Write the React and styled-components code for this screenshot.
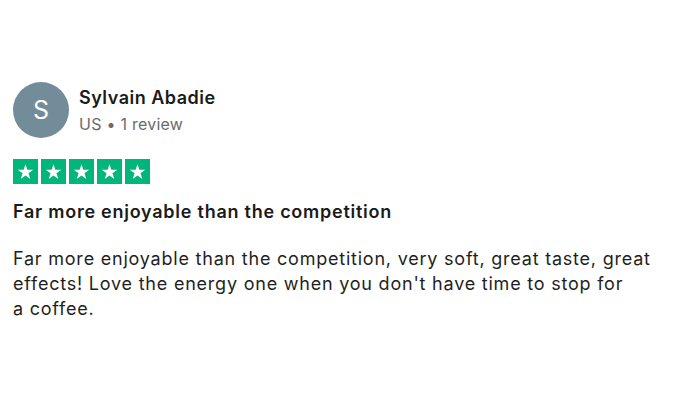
import React from "react";
import styled, { createGlobalStyle } from "styled-components";

const Global = createGlobalStyle`
  html, body { margin: 0; padding: 0; background: #ffffff; }
  body { font-family: Inter, "Noto Sans", Arial, sans-serif; -webkit-font-smoothing: antialiased; }
`;

const Card = styled.article`
  width: 700px;
  height: 400px;
  box-sizing: border-box;
  padding: 82px 13px 0 13px;
  display: flex;
  flex-direction: column;
`;

const Header = styled.header`
  display: flex;
  align-items: center;
  gap: 10px;
`;

const Avatar = styled.div`
  width: 56px;
  height: 56px;
  border-radius: 50%;
  background: #728c9a;
  color: #ffffff;
  display: flex;
  align-items: center;
  justify-content: center;
  font-size: 25px;
  font-weight: 400;
  flex-shrink: 0;
`;

const Info = styled.div`
  display: flex;
  flex-direction: column;
  gap: 4px;
`;

const Name = styled.div`
  font-size: 18px;
  line-height: 24px;
  font-weight: 600;
  letter-spacing: 0.5px;
  color: #1a1a1a;
`;

const Meta = styled.div`
  font-size: 16px;
  line-height: 20px;
  letter-spacing: 0.25px;
  color: #6b6b6b;
`;

const Stars = styled.div`
  display: flex;
  gap: 3px;
  margin-top: 21px;
`;

const StarBox = styled.span`
  width: 25px;
  height: 25px;
  background: ${p => (p.$on ? "#00b67a" : "#dcdce6")};
  display: flex;
  align-items: center;
  justify-content: center;
`;

const Title = styled.h2`
  margin: 16px 0 0 0;
  font-size: 18px;
  line-height: 24px;
  font-weight: 600;
  letter-spacing: 0.75px;
  color: #1a1a1a;
`;

const Body = styled.p`
  margin: 22px 0 0 0;
  max-width: 660px;
  font-size: 18px;
  line-height: 25px;
  letter-spacing: 0.78px;
  color: #1f1f1f;
`;

const Star = () => (
  <svg width="17" height="17" viewBox="0 0 24 24" aria-hidden="true">
    <path
      fill="#ffffff"
      d="M12 1.8l2.6 7.9h8.3l-6.7 4.9 2.6 7.9L12 17.6l-6.8 4.9 2.6-7.9-6.7-4.9h8.3z"
    />
  </svg>
);

export default function App() {
  return (
    <>
      <Global />
      <Card>
        <Header>
          <Avatar>S</Avatar>
          <Info>
            <Name>Sylvain Abadie</Name>
            <Meta>US • 1 review</Meta>
          </Info>
        </Header>
        <Stars>
          {[0, 1, 2, 3, 4].map(i => (
            <StarBox key={i} $on>
              <Star />
            </StarBox>
          ))}
        </Stars>
        <Title>Far more enjoyable than the competition</Title>
        <Body>
          Far more enjoyable than the competition, very soft, great taste, great
          effects! Love the energy one when you don't have time to stop for
          {" "}a{"\u00a0"}coffee.
        </Body>
      </Card>
    </>
  );
}
